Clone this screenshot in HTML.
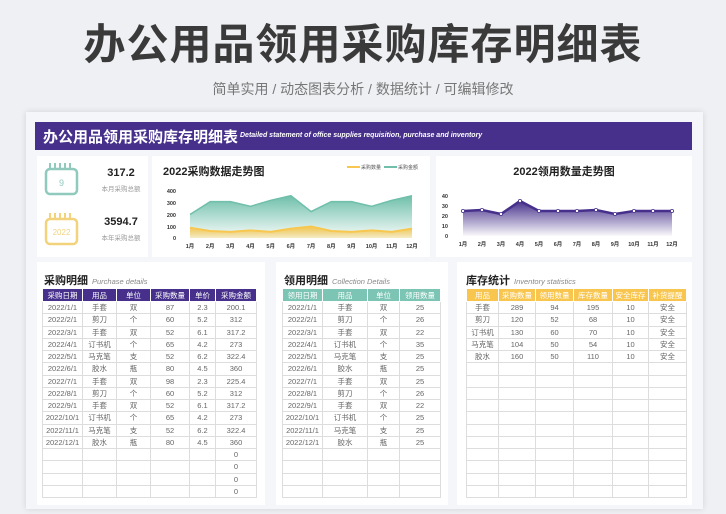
<!DOCTYPE html>
<html><head><meta charset="utf-8"><style>
*{margin:0;padding:0;box-sizing:border-box}
body{width:726px;height:514px;background:#eef0f3;font-family:"Liberation Sans","Noto Sans CJK SC",sans-serif;position:relative;overflow:hidden;color:#333}
.a{position:absolute}
.title{left:0;width:726px;top:18px;text-align:center;font-size:42px;color:#3a3a3a;letter-spacing:1px;line-height:54px;font-weight:bold}
.sub{left:0;width:726px;top:78px;text-align:center;font-size:14px;color:#777;line-height:22px}
.card{left:26px;top:112px;width:677px;height:397px;background:#f5f6f9;box-shadow:0 0 6px rgba(0,0,0,.12)}
.band{left:35px;top:122px;width:657px;height:28px;background:#46308b;color:#fff}
.band b{position:absolute;left:8px;top:4px;font-size:15px;white-space:nowrap}
.band i{position:absolute;left:205px;top:10px;font-size:7px;font-weight:bold;white-space:nowrap}
.p{background:#fff}
table{border-collapse:collapse;position:absolute;table-layout:fixed;font-size:7.5px;color:#666}
td{border:1px solid #ddd;text-align:center;height:12.25px;padding:0;white-space:nowrap;overflow:hidden}
tr.h td{color:#fff;height:13px;border-color:rgba(255,255,255,.5)}
.ph{font-size:11px;font-weight:bold;color:#222}
.ph i{font-size:7.5px;color:#888;font-weight:normal;margin-left:4px}
</style></head><body>
<div class="a title">办公用品领用采购库存明细表</div>
<div class="a sub">简单实用 / 动态图表分析 / 数据统计 / 可编辑修改</div>
<div class="a card"></div>
<div class="a band"><b>办公用品领用采购库存明细表</b><i>Detailed statement of office supplies requisition, purchase and inventory</i></div>
<div class="a p" style="left:37px;top:156px;width:111px;height:101px"></div>
<div class="a p" style="left:152px;top:156px;width:278px;height:101px"></div>
<div class="a p" style="left:436px;top:156px;width:256px;height:101px"></div>
<div class="a p" style="left:37px;top:262px;width:228px;height:243px"></div>
<div class="a p" style="left:276px;top:262px;width:172px;height:243px"></div>
<div class="a p" style="left:457px;top:262px;width:235px;height:243px"></div>

<div class="a" style="left:101px;top:167px;width:40px;text-align:center;font-size:11px;font-weight:bold;color:#222">317.2</div>
<div class="a" style="left:91px;top:183px;width:60px;text-align:center;font-size:6.5px;color:#999">本月采购总额</div>
<div class="a" style="left:96px;top:216px;width:50px;text-align:center;font-size:11px;font-weight:bold;color:#222">3594.7</div>
<div class="a" style="left:91px;top:232px;width:60px;text-align:center;font-size:6.5px;color:#999">本年采购总额</div>

<svg class="a" style="left:0;top:0" width="726" height="514" viewBox="0 0 726 514">
<defs>
<linearGradient id="gt" x1="0" y1="0" x2="0" y2="1"><stop offset="0" stop-color="#6fbfaa"/><stop offset="1" stop-color="#6fbfaa" stop-opacity=".05"/></linearGradient>
<linearGradient id="gy" x1="0" y1="0" x2="0" y2="1"><stop offset="0" stop-color="#f7c74f"/><stop offset="1" stop-color="#f7c74f" stop-opacity=".3"/></linearGradient>
<linearGradient id="gp" x1="0" y1="0" x2="0" y2="1"><stop offset="0" stop-color="#46308b"/><stop offset="1" stop-color="#46308b" stop-opacity=".03"/></linearGradient>
</defs>
<g fill="none" stroke="#8fcabd" stroke-width="2.5"><rect x="46" y="169" width="31" height="25" rx="4"/></g>
<g stroke="#8fcabd" stroke-width="2"><line x1="50" y1="163" x2="50" y2="169"/><line x1="55" y1="163" x2="55" y2="169"/><line x1="60" y1="163" x2="60" y2="169"/><line x1="65" y1="163" x2="65" y2="169"/><line x1="70" y1="163" x2="70" y2="169"/></g>
<text x="61.5" y="186" font-size="9" fill="#8fcabd" text-anchor="middle">9</text>
<g fill="none" stroke="#f2d27b" stroke-width="2.5"><rect x="46" y="219" width="31" height="25" rx="4"/></g>
<g stroke="#f2d27b" stroke-width="2"><line x1="50" y1="213" x2="50" y2="219"/><line x1="55" y1="213" x2="55" y2="219"/><line x1="60" y1="213" x2="60" y2="219"/><line x1="65" y1="213" x2="65" y2="219"/><line x1="70" y1="213" x2="70" y2="219"/></g>
<text x="61.5" y="235" font-size="8" fill="#f2d27b" text-anchor="middle">2022</text>
<text x="163" y="175" font-size="11" font-weight="bold" fill="#222">2022采购数据走势图</text>
<line x1="347" y1="167" x2="360" y2="167" stroke="#f7c74f" stroke-width="2"/><text x="361" y="169" font-size="5" fill="#555">采购数量</text>
<line x1="384" y1="167" x2="397" y2="167" stroke="#6fbfaa" stroke-width="2"/><text x="398" y="169" font-size="5" fill="#555">采购金额</text>
<g font-size="5.5" fill="#333" font-weight="bold" text-anchor="end"><text x="176" y="193">400</text><text x="176" y="205">300</text><text x="176" y="217">200</text><text x="176" y="229">100</text><text x="176" y="240">0</text></g>
<polygon fill="url(#gt)" points="190,238 190,214.5 210.2,201.6 230.4,201.6 250.5,206.3 270.7,200.4 290.9,195.7 311.1,211.6 331.3,201.6 351.5,201.6 371.6,206.3 391.8,200.4 412,195.7 412,238"/>
<polyline fill="none" stroke="#6fbfaa" stroke-width="1.5" points="190,214.5 210.2,201.6 230.4,201.6 250.5,206.3 270.7,200.4 290.9,195.7 311.1,211.6 331.3,201.6 351.5,201.6 371.6,206.3 391.8,200.4 412,195.7"/>
<polygon fill="url(#gy)" points="190,238 190,227.8 210.2,231 230.4,231.9 250.5,230.4 270.7,231.9 290.9,228.6 311.1,226.5 331.3,231 351.5,231.9 371.6,230.4 391.8,231.9 412,228.6 412,238"/>
<polyline fill="none" stroke="#f7c74f" stroke-width="2" points="190,227.8 210.2,231 230.4,231.9 250.5,230.4 270.7,231.9 290.9,228.6 311.1,226.5 331.3,231 351.5,231.9 371.6,230.4 391.8,231.9 412,228.6"/>
<g font-size="5.5" fill="#333" font-weight="bold" text-anchor="middle"><text x="190" y="248">1月</text><text x="210.2" y="248">2月</text><text x="230.4" y="248">3月</text><text x="250.5" y="248">4月</text><text x="270.7" y="248">5月</text><text x="290.9" y="248">6月</text><text x="311.1" y="248">7月</text><text x="331.3" y="248">8月</text><text x="351.5" y="248">9月</text><text x="371.6" y="248">10月</text><text x="391.8" y="248">11月</text><text x="412" y="248">12月</text></g>
<text x="564" y="175" font-size="11" font-weight="bold" fill="#222" text-anchor="middle">2022领用数量走势图</text>
<g font-size="5.5" fill="#333" font-weight="bold" text-anchor="end"><text x="448" y="198">40</text><text x="448" y="208">30</text><text x="448" y="218">20</text><text x="448" y="228">10</text><text x="448" y="238">0</text></g>
<polygon fill="url(#gp)" points="463,236 463,211 482,210 501,214 520,201 539,211 558,211 577,211 596,210 615,214 634,211 653,211 672,211 672,236"/>
<polyline fill="none" stroke="#46308b" stroke-width="2.5" points="463,211 482,210 501,214 520,201 539,211 558,211 577,211 596,210 615,214 634,211 653,211 672,211"/>
<g fill="#fff" stroke="#46308b" stroke-width=".8"><circle cx="463" cy="211" r="1.6"/><circle cx="482" cy="210" r="1.6"/><circle cx="501" cy="214" r="1.6"/><circle cx="520" cy="201" r="1.6"/><circle cx="539" cy="211" r="1.6"/><circle cx="558" cy="211" r="1.6"/><circle cx="577" cy="211" r="1.6"/><circle cx="596" cy="210" r="1.6"/><circle cx="615" cy="214" r="1.6"/><circle cx="634" cy="211" r="1.6"/><circle cx="653" cy="211" r="1.6"/><circle cx="672" cy="211" r="1.6"/></g>
<g font-size="5.5" fill="#333" font-weight="bold" text-anchor="middle"><text x="463" y="246">1月</text><text x="482" y="246">2月</text><text x="501" y="246">3月</text><text x="520" y="246">4月</text><text x="539" y="246">5月</text><text x="558" y="246">6月</text><text x="577" y="246">7月</text><text x="596" y="246">8月</text><text x="615" y="246">9月</text><text x="634" y="246">10月</text><text x="653" y="246">11月</text><text x="672" y="246">12月</text></g>
</svg>

<div class="a ph" style="left:44px;top:272px">采购明细<i>Purchase details</i></div>
<div class="a ph" style="left:284px;top:272px">领用明细<i>Collection Details</i></div>
<div class="a ph" style="left:466px;top:272px">库存统计<i>Inventory statistics</i></div>

<table style="left:42px;top:288px;width:214px">
<colgroup><col style="width:40px"><col style="width:34px"><col style="width:34px"><col style="width:39px"><col style="width:26px"><col style="width:41px"></colgroup>
<tr class="h" style="background:#46308b"><td>采购日期</td><td>用品</td><td>单位</td><td>采购数量</td><td>单价</td><td>采购金额</td></tr>
<tr><td>2022/1/1</td><td>手套</td><td>双</td><td>87</td><td>2.3</td><td>200.1</td></tr>
<tr><td>2022/2/1</td><td>剪刀</td><td>个</td><td>60</td><td>5.2</td><td>312</td></tr>
<tr><td>2022/3/1</td><td>手套</td><td>双</td><td>52</td><td>6.1</td><td>317.2</td></tr>
<tr><td>2022/4/1</td><td>订书机</td><td>个</td><td>65</td><td>4.2</td><td>273</td></tr>
<tr><td>2022/5/1</td><td>马克笔</td><td>支</td><td>52</td><td>6.2</td><td>322.4</td></tr>
<tr><td>2022/6/1</td><td>胶水</td><td>瓶</td><td>80</td><td>4.5</td><td>360</td></tr>
<tr><td>2022/7/1</td><td>手套</td><td>双</td><td>98</td><td>2.3</td><td>225.4</td></tr>
<tr><td>2022/8/1</td><td>剪刀</td><td>个</td><td>60</td><td>5.2</td><td>312</td></tr>
<tr><td>2022/9/1</td><td>手套</td><td>双</td><td>52</td><td>6.1</td><td>317.2</td></tr>
<tr><td>2022/10/1</td><td>订书机</td><td>个</td><td>65</td><td>4.2</td><td>273</td></tr>
<tr><td>2022/11/1</td><td>马克笔</td><td>支</td><td>52</td><td>6.2</td><td>322.4</td></tr>
<tr><td>2022/12/1</td><td>胶水</td><td>瓶</td><td>80</td><td>4.5</td><td>360</td></tr>
<tr><td></td><td></td><td></td><td></td><td></td><td>0</td></tr>
<tr><td></td><td></td><td></td><td></td><td></td><td>0</td></tr>
<tr><td></td><td></td><td></td><td></td><td></td><td>0</td></tr>
<tr><td></td><td></td><td></td><td></td><td></td><td>0</td></tr>
</table>

<table style="left:282px;top:288px;width:158px">
<colgroup><col style="width:40px"><col style="width:45px"><col style="width:32px"><col style="width:41px"></colgroup>
<tr class="h" style="background:#7cc4b3"><td>领用日期</td><td>用品</td><td>单位</td><td>领用数量</td></tr>
<tr><td>2022/1/1</td><td>手套</td><td>双</td><td>25</td></tr>
<tr><td>2022/2/1</td><td>剪刀</td><td>个</td><td>26</td></tr>
<tr><td>2022/3/1</td><td>手套</td><td>双</td><td>22</td></tr>
<tr><td>2022/4/1</td><td>订书机</td><td>个</td><td>35</td></tr>
<tr><td>2022/5/1</td><td>马克笔</td><td>支</td><td>25</td></tr>
<tr><td>2022/6/1</td><td>胶水</td><td>瓶</td><td>25</td></tr>
<tr><td>2022/7/1</td><td>手套</td><td>双</td><td>25</td></tr>
<tr><td>2022/8/1</td><td>剪刀</td><td>个</td><td>26</td></tr>
<tr><td>2022/9/1</td><td>手套</td><td>双</td><td>22</td></tr>
<tr><td>2022/10/1</td><td>订书机</td><td>个</td><td>25</td></tr>
<tr><td>2022/11/1</td><td>马克笔</td><td>支</td><td>25</td></tr>
<tr><td>2022/12/1</td><td>胶水</td><td>瓶</td><td>25</td></tr>
<tr><td></td><td></td><td></td><td></td></tr>
<tr><td></td><td></td><td></td><td></td></tr>
<tr><td></td><td></td><td></td><td></td></tr>
<tr><td></td><td></td><td></td><td></td></tr>
</table>

<table style="left:466px;top:288px;width:220px">
<colgroup><col style="width:32px"><col style="width:37px"><col style="width:38px"><col style="width:39px"><col style="width:36px"><col style="width:38px"></colgroup>
<tr class="h" style="background:#f8c64f"><td>用品</td><td>采购数量</td><td>领用数量</td><td>库存数量</td><td>安全库存</td><td>补货提醒</td></tr>
<tr><td>手套</td><td>289</td><td>94</td><td>195</td><td>10</td><td>安全</td></tr>
<tr><td>剪刀</td><td>120</td><td>52</td><td>68</td><td>10</td><td>安全</td></tr>
<tr><td>订书机</td><td>130</td><td>60</td><td>70</td><td>10</td><td>安全</td></tr>
<tr><td>马克笔</td><td>104</td><td>50</td><td>54</td><td>10</td><td>安全</td></tr>
<tr><td>胶水</td><td>160</td><td>50</td><td>110</td><td>10</td><td>安全</td></tr>
<tr><td></td><td></td><td></td><td></td><td></td><td></td></tr>
<tr><td></td><td></td><td></td><td></td><td></td><td></td></tr>
<tr><td></td><td></td><td></td><td></td><td></td><td></td></tr>
<tr><td></td><td></td><td></td><td></td><td></td><td></td></tr>
<tr><td></td><td></td><td></td><td></td><td></td><td></td></tr>
<tr><td></td><td></td><td></td><td></td><td></td><td></td></tr>
<tr><td></td><td></td><td></td><td></td><td></td><td></td></tr>
<tr><td></td><td></td><td></td><td></td><td></td><td></td></tr>
<tr><td></td><td></td><td></td><td></td><td></td><td></td></tr>
<tr><td></td><td></td><td></td><td></td><td></td><td></td></tr>
<tr><td></td><td></td><td></td><td></td><td></td><td></td></tr>
</table>
</body></html>
